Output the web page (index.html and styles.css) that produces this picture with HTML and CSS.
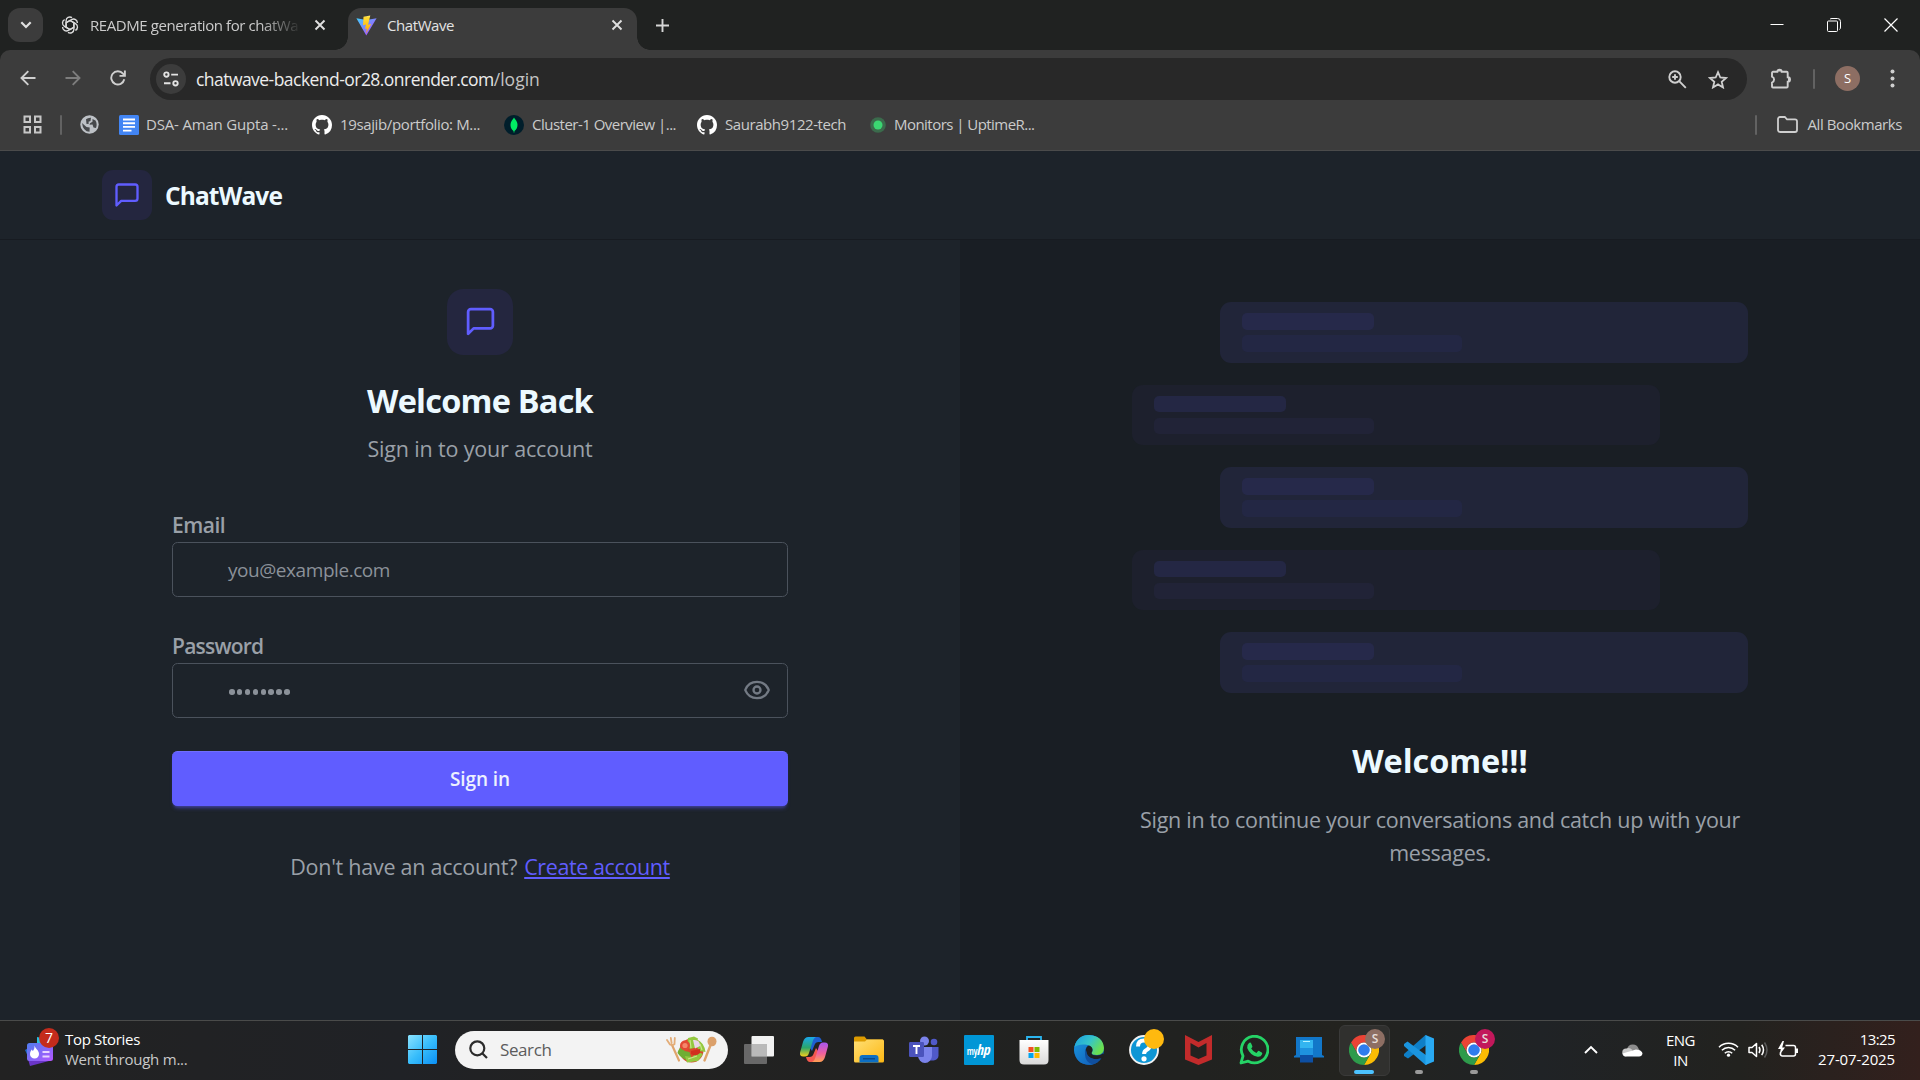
FILE: index.html
```html
<!DOCTYPE html>
<html lang="en">
<head>
<meta charset="utf-8">
<title>ChatWave</title>
<link rel="stylesheet" href="styles.css">
</head>
<body>
<svg class="defs" width="0" height="0" aria-hidden="true">
  <defs>
    <linearGradient id="gWin" x1="0" y1="0" x2="1" y2="1"><stop offset="0" stop-color="#8be3ff"/><stop offset=".5" stop-color="#38bdfb"/><stop offset="1" stop-color="#0a8ff5"/></linearGradient>
    <linearGradient id="gVite" x1="0" y1="0" x2="1" y2="1"><stop offset="0" stop-color="#41d1ff"/><stop offset="1" stop-color="#bd34fe"/></linearGradient>
    <linearGradient id="gBolt" x1="0" y1="0" x2="0" y2="1"><stop offset="0" stop-color="#ffea83"/><stop offset=".1" stop-color="#ffdd35"/><stop offset="1" stop-color="#ffa800"/></linearGradient>
    <linearGradient id="gNews" x1="0" y1="0" x2="1" y2="1"><stop offset="0" stop-color="#4f7df0"/><stop offset="1" stop-color="#b455ff"/></linearGradient>
    <linearGradient id="gFold" x1="0" y1="0" x2="1" y2="1"><stop offset="0" stop-color="#ffdf75"/><stop offset="1" stop-color="#fdb813"/></linearGradient>
    <linearGradient id="gEdge" x1="0" y1="0" x2="1" y2=".5"><stop offset="0" stop-color="#1b9de2"/><stop offset=".55" stop-color="#36c5c9"/><stop offset="1" stop-color="#6be04e"/></linearGradient>
    <linearGradient id="gEdge2" x1="0" y1="0" x2="1" y2="1"><stop offset="0" stop-color="#1a9be0"/><stop offset="1" stop-color="#1156b5"/></linearGradient>
    <linearGradient id="gCopA" x1="0" y1="0" x2="0" y2="1"><stop offset="0" stop-color="#1aa7ec"/><stop offset=".55" stop-color="#2ba66a"/><stop offset="1" stop-color="#f5cf1b"/></linearGradient>
    <linearGradient id="gCopB" x1="0" y1="1" x2="0" y2="0"><stop offset="0" stop-color="#a556f0"/><stop offset=".55" stop-color="#ee5fa0"/><stop offset="1" stop-color="#ffa052"/></linearGradient>
    <linearGradient id="gBag" x1="0" y1="0" x2="0" y2="1"><stop offset="0" stop-color="#ffffff"/><stop offset="1" stop-color="#d9d9d9"/></linearGradient>
    <symbol id="message" viewBox="0 0 24 24"><path d="M21 15a2 2 0 0 1-2 2H7l-4 4V5a2 2 0 0 1 2-2h14a2 2 0 0 1 2 2z" fill="none" stroke="currentColor" stroke-width="2" stroke-linecap="round" stroke-linejoin="round"/></symbol>
    <symbol id="cross" viewBox="0 0 12 12"><path d="M1.5 1.5l9 9M10.5 1.5l-9 9" stroke="currentColor" stroke-width="1.9" fill="none"/></symbol>
    <symbol id="github" viewBox="0 0 16 16"><path fill="#fff" d="M8 0C3.58 0 0 3.58 0 8c0 3.54 2.29 6.53 5.47 7.59.4.07.55-.17.55-.38 0-.19-.01-.82-.01-1.49-2.01.37-2.53-.49-2.69-.94-.09-.23-.48-.94-.82-1.13-.28-.15-.68-.52-.01-.53.63-.01 1.08.58 1.23.82.72 1.21 1.87.87 2.33.66.07-.52.28-.87.51-1.07-1.78-.2-3.64-.89-3.64-3.95 0-.87.31-1.59.82-2.15-.08-.2-.36-1.02.08-2.12 0 0 .67-.21 2.2.82.64-.18 1.32-.27 2-.27s1.36.09 2 .27c1.53-1.04 2.2-.82 2.2-.82.44 1.1.16 1.92.08 2.12.51.56.82 1.27.82 2.15 0 3.07-1.87 3.75-3.65 3.95.29.25.54.73.54 1.48 0 1.07-.01 1.93-.01 2.2 0 .21.15.46.55.38A8.01 8.01 0 0 0 16 8c0-4.42-3.58-8-8-8z"/></symbol>
    <symbol id="chrome" viewBox="0 0 30 30">
      <path fill="#ea4335" d="M2 7.5a15 15 0 0 1 26 0H15a7.500 7.500 0 0 0-6.500 11.250z"/>
      <path fill="#fbbc04" d="M28 7.500A15 15 0 0 1 15 30l6.500-11.250A7.500 7.500 0 0 0 15 7.500z"/>
      <path fill="#2e9b4b" d="M15 30A15 15 0 0 1 2 7.500l6.500 11.250a7.500 7.500 0 0 0 13 0z"/>
      <circle cx="15" cy="15" r="7.5" fill="#fff"/><circle cx="15" cy="15" r="5.8" fill="#2f7cee"/>
    </symbol>
  </defs>
</svg>

<header class="browser">
  <div class="tabstrip">
    <div class="tab-search"><svg width="12" height="8" viewBox="0 0 12 8"><path d="M1.300 1.300L6 6l4.700-4.700" fill="none" stroke="#e0e0e0" stroke-width="2.200"/></svg></div>
    <div class="tab">
      <svg width="18" height="18" viewBox="1.400 1.400 15.200 15.200" fill="none" stroke="#dcdcdc" stroke-width="1.150">
        <path d="M9 5.200L12.300 7.100V12.500a3.200 3.200 0 0 1-5 2.700"/><path d="M9 5.200L12.300 7.100V12.500a3.200 3.200 0 0 1-5 2.700" transform="rotate(60 9 9)"/><path d="M9 5.200L12.300 7.100V12.500a3.200 3.200 0 0 1-5 2.700" transform="rotate(120 9 9)"/><path d="M9 5.200L12.300 7.100V12.500a3.200 3.200 0 0 1-5 2.700" transform="rotate(180 9 9)"/><path d="M9 5.200L12.300 7.100V12.500a3.200 3.200 0 0 1-5 2.700" transform="rotate(240 9 9)"/><path d="M9 5.200L12.300 7.100V12.500a3.200 3.200 0 0 1-5 2.700" transform="rotate(300 9 9)"/>
      </svg>
      <span class="tab-title fading">README generation for chatWa</span>
      <svg class="tab-close" width="12" height="12"><use href="#cross"/></svg>
    </div>
    <div class="tab active">
      <svg width="21" height="21" viewBox="0 0 21 21"><path d="M.4 3.200L10.300 20.600 20.600 3.200 10.500 5z" fill="url(#gVite)"/><path d="M14.300.4L7.500 1.700 7 10.200l3-.6-.9 4.400 1.900-.5-1 4.900 5.200-9.300-3.100.6z" fill="url(#gBolt)"/></svg>
      <span class="tab-title">ChatWave</span>
      <svg class="tab-close" width="12" height="12"><use href="#cross"/></svg>
    </div>
    <svg class="new-tab" width="13" height="13" viewBox="0 0 13 13"><path d="M6.500 0v13M0 6.500h13" stroke="#d6d6d6" stroke-width="1.900"/></svg>
    <div class="window-controls">
      <svg width="14" height="14" viewBox="0 0 14 14"><path d="M.5 6.500h13" stroke="#fff" stroke-width="1"/></svg>
      <svg width="14" height="14" viewBox="0 0 14 14" fill="none" stroke="#fff"><rect x=".5" y="3" width="10" height="10.500" rx="1"/><path d="M3 1.200Q3.500.5 5 .5h5.500a3 3 0 0 1 3 3V9q0 2-1 2.500"/></svg>
      <svg width="14" height="14" viewBox="0 0 14 14"><path d="M.5.500l13 13M13.500.500l-13 13" stroke="#fff" stroke-width="1.200"/></svg>
    </div>
  </div>

  <div class="toolbar">
    <div class="nav-buttons">
      <svg width="16" height="16" viewBox="0 0 16 16" fill="none" stroke="#cfcfcf" stroke-width="1.900"><path d="M15.500 8H2M8.300 1.200L1.500 8l6.800 6.800"/></svg>
      <svg width="16" height="16" viewBox="0 0 16 16" fill="none" stroke="#7d7d7d" stroke-width="1.900"><path d="M.5 8H14M7.700 1.200L14.500 8l-6.800 6.800"/></svg>
      <svg width="16" height="16" viewBox="0 0 16 16" fill="none" stroke="#cfcfcf" stroke-width="1.900"><path d="M14.300 9.300A6.600 6.600 0 1 1 13 3.700L14.500 5.300M14.900.5v5.400H9.500"/></svg>
    </div>
    <div class="omnibox">
      <div class="site-info"><svg width="16" height="16" viewBox="0 0 16 16" fill="none" stroke="#e3e3e3" stroke-width="1.900"><circle cx="3.400" cy="3.600" r="2.200"/><path d="M8.200 3.600H15M1 12.300h6.500"/><circle cx="12.500" cy="12.300" r="2.200"/></svg></div>
      <span class="url">chatwave-backend-or28.onrender.com<span class="path">/login</span></span>
      <svg class="zoom-icon" width="19" height="19" viewBox="0 0 19 19" fill="none" stroke="#cfcfcf" stroke-width="1.900"><circle cx="7" cy="7" r="5.700"/><path d="M11.200 11.200l6.600 6.600M7 4.200v5.600M4.200 7h5.600"/></svg>
      <svg width="20" height="19" viewBox="0 0 20 19" fill="none" stroke="#cfcfcf" stroke-width="1.800"><path d="M10 2.200l2.300 5.300 5.700.5-4.300 3.800 1.300 5.600-5-3-5 3 1.300-5.600L2 8l5.700-.5z"/></svg>
    </div>
    <svg class="puzzle" width="22" height="22" viewBox="0 0 22 22"><path d="M3 3.800h4.300a2.200 2.200 0 0 1 4.400 0h5a1 1 0 0 1 1 1v4.400a2.300 2.300 0 0 1 0 4.600V18.500a1 1 0 0 1-1 1H3a1 1 0 0 1-1-1V14.600a3.200 3.200 0 0 0 0-6V4.800a1 1 0 0 1 1-1z" fill="none" stroke="#cfcfcf" stroke-width="1.900"/><path d="M7.300 3.500a2.200 2.200 0 0 1 4.400 0zM18 9.200a2.300 2.300 0 0 1 0 4.600z" fill="#cfcfcf"/></svg>
    <i class="divider"></i>
    <span class="avatar">S</span>
    <svg width="5" height="22" viewBox="0 0 5 22" fill="#cfcfcf"><circle cx="2.500" cy="3.500" r="2"/><circle cx="2.500" cy="10.500" r="2"/><circle cx="2.500" cy="17.500" r="2"/></svg>
  </div>

  <div class="bookmarks">
    <svg class="apps" width="19" height="19" viewBox="0 0 19 19" fill="none" stroke="#c7c7c7" stroke-width="2"><path d="M1.500 1.500h5.500v5.500H1.500zM12 1.500h5.500v5.500H12zM1.500 12h5.500v5.500H1.500zM12 12h5.500v5.500H12z"/></svg>
    <i class="divider"></i>
    <svg class="globe" width="19" height="19" viewBox="0 0 19 19"><circle cx="9.500" cy="9.500" r="9.200" fill="#bdc1c6"/><path d="M6 4.300q2-1.800 5-1.600L10.500 6l-2 .8.300 2L6.500 9zM2 8l4.500 4 3.200.6-.2 4.200Q3 16.500 2 8zM12.500 4l3 1.500Q17.500 9 16 13l-2.500-.6-1-2.900-3 .3.500-1.600 2.500-1.400z" fill="#46484b"/></svg>
    <div class="bookmark b-dsa"><svg width="20" height="20" viewBox="0 0 20 20"><rect width="20" height="20" rx="1.500" fill="#4285f4"/><path d="M4 4.500h12M4 8.200h12M4 11.900h12M4 15.600h8.500" stroke="#fff" stroke-width="1.900"/></svg><span>DSA- Aman Gupta -...</span></div>
    <div class="bookmark b-port"><svg width="20" height="20"><use href="#github"/></svg><span>19sajib/portfolio: M...</span></div>
    <div class="bookmark b-clus"><svg width="20" height="20" viewBox="0 0 20 20"><circle cx="10" cy="10" r="10" fill="#001e2b"/><path d="M10 2.500c1 2 3.500 3.800 3.500 7.500 0 3-1.500 4.800-3.100 6v1.500h-.8V16C8 14.800 6.500 13 6.500 10c0-3.700 2.500-5.500 3.500-7.500z" fill="#00ed64"/></svg><span>Cluster-1 Overview |...</span></div>
    <div class="bookmark b-saur"><svg width="20" height="20"><use href="#github"/></svg><span>Saurabh9122-tech</span></div>
    <div class="bookmark b-mon"><svg width="16" height="16" viewBox="0 0 16 16"><circle cx="8" cy="8" r="7.800" fill="#3b6b4c"/><circle cx="8" cy="8" r="4.500" fill="#3bd671"/></svg><span>Monitors | UptimeR...</span></div>
    <div class="all-bookmarks"><i class="divider"></i><svg width="21" height="17" viewBox="0 0 21 17"><path d="M1 3a2 2 0 0 1 2-2h4.800L10 3.300h8a2 2 0 0 1 2 2V14a2 2 0 0 1-2 2H3a2 2 0 0 1-2-2z" fill="none" stroke="#cfcfcf" stroke-width="1.800"/></svg><span>All Bookmarks</span></div>
  </div>
</header>

<div class="page">
  <nav class="navbar">
    <div class="logo"><svg width="28" height="28"><use href="#message"/></svg></div>
    <span class="brand">ChatWave</span>
  </nav>
  <main class="columns">
    <section class="login">
      <div class="logo large"><svg width="33" height="33"><use href="#message"/></svg></div>
      <h1>Welcome Back</h1>
      <p class="subtitle">Sign in to your account</p>
      <form>
        <label class="l-email">Email</label>
        <div class="field">you@example.com</div>
        <label class="l-pass">Password</label>
        <div class="field"><span class="dots"><i></i><i></i><i></i><i></i><i></i><i></i><i></i><i></i></span>
          <svg class="eye" width="28" height="28" viewBox="0 0 24 24" fill="none" stroke="#737a84" stroke-width="2" stroke-linecap="round" stroke-linejoin="round"><path d="M2.062 12.348a1 1 0 0 1 0-.696 10.750 10.750 0 0 1 19.876 0 1 1 0 0 1 0 .696 10.750 10.750 0 0 1-19.876 0"/><circle cx="12" cy="12" r="3"/></svg>
        </div>
        <div class="submit">Sign in</div>
      </form>
      <p class="signup"><span>Don't have an account?</span><a>Create account</a></p>
    </section>
    <section class="showcase">
      <div class="bubbles">
        <div class="bubble end"><i></i><b></b></div>
        <div class="bubble"><i></i><b></b></div>
        <div class="bubble end"><i></i><b></b></div>
        <div class="bubble"><i></i><b></b></div>
        <div class="bubble end"><i></i><b></b></div>
      </div>
      <h2>Welcome!!!</h2>
      <p class="blurb">Sign in to continue your conversations and catch up with your messages.</p>
    </section>
  </main>
</div>

<footer class="taskbar">
  <div class="widget">
    <div class="news">
      <svg width="30" height="32" viewBox="0 0 30 32"><path d="M12 2l14 3v12H12z" fill="#29bfe0"/><path d="M0 15l5-3v14z" fill="#2469c9"/><path d="M3 24l21 2-19 5z" fill="#6a35c8"/><rect x="2" y="8" width="26" height="18" rx="2.500" fill="url(#gNews)"/><path d="M9.500 10.500c.5 3 4.500 4.500 4.500 8.500a4.500 4.500 0 0 1-9 .2c0-2.300 1-3 1.500-4.700l1.400 1.500c1.300-1.500 1.700-3 1.600-5.500z" fill="#fff"/><path d="M17.500 17h7M17.500 21.500h7" stroke="#e8d4ff" stroke-width="1.800"/></svg>
      <span class="count">7</span>
    </div>
    <div class="headline"><span class="title">Top Stories</span><span class="text">Went through m...</span></div>
  </div>
  <svg class="start" width="29" height="29" viewBox="0 0 29 29"><path d="M1 0h13v14H0V1zM15 0h13l1 1v13H15zM0 15h14v14H1l-1-1zM15 15h14v13l-1 1H15z" fill="url(#gWin)"/></svg>
  <div class="search">
    <svg width="19" height="19" viewBox="0 0 19 19" fill="none" stroke="#2b2b2b" stroke-width="2.200"><circle cx="8.300" cy="8.300" r="7"/><path d="M13.200 13.200l4.800 4.800"/></svg>
    <span>Search</span>
    <svg width="51" height="28" viewBox="0 0 51 28">
      <path d="M6 9l7 15.500" stroke="#dfa46c" stroke-width="2.200" stroke-linecap="round"/><path d="M1 4l3 4.500q2.500 1.500 4.500-.5L8.800 2M4.800 2l.8 5" stroke="#e3ad78" stroke-width="1.800" fill="none" stroke-linecap="round"/>
      <path d="M45 8l-6.500 16.500" stroke="#dfa46c" stroke-width="2.400" stroke-linecap="round"/><ellipse cx="46" cy="5.500" rx="4.500" ry="4.800" fill="#dba06a"/>
      <circle cx="25.500" cy="14.500" r="12" fill="#d8492c"/><path d="M11.500 17q1-5 6-8l1 6 5 1 2 6-2 3q-8-2-12-8z" fill="#6fae33"/><path d="M22 2l6-1.500 4 2-2 9-6 1.500-3-4zM31 4q7 2 8.500 12l-6-1-4-6zM19 20l7 1 6-5 5 2-5 7-11 1.500z" fill="#93c83f"/><path d="M24 4l1 8M34 8l2 6M22 23l9-3" stroke="#c9e688" stroke-width="1.200"/><circle cx="19" cy="9.500" r="5" fill="#e34a33"/><circle cx="19" cy="9.500" r="2.600" fill="#f4876b"/><path d="M27 4q7-1 7 6l-5 2.500z" fill="#e9d6e8"/><path d="M25 15l9-2v4q-4 4-9 1z" fill="#d1301f"/>
    </svg>
  </div>
  <div class="apps-row">
    <div class="app"><svg width="30" height="28" viewBox="0 0 30 28"><rect x="7.500" y="0" width="22.500" height="20.500" rx="1" fill="#f1f1f1"/><rect x="0" y="8" width="23" height="20" rx="1" fill="#747474" opacity=".85"/><path d="M7.500 8H23v12.500H7.500z" fill="#b9b9b9"/></svg></div>
    <div class="app"><svg width="28" height="25" viewBox="0 0 28 25"><path d="M8 0h10q3 0 4 5h-3.500q-3 0-4 3L12 14 8 8z" fill="#1d5fd0"/><path d="M8 0h10q3 0 4 5h-3.500q-3 0-4 3L12 14 8 8z" fill="#f4584f" transform="rotate(180 14 12.500)"/><path d="M8.500 0H16q-2.500 1-3.500 5L9 16q-1 3.500-4 3.500H3Q-1 19.500.200 15L3 5Q4.500 0 8.500 0z" fill="url(#gCopA)"/><path d="M8.500 0H16q-2.500 1-3.500 5L9 16q-1 3.500-4 3.500H3Q-1 19.500.200 15L3 5Q4.500 0 8.500 0z" fill="url(#gCopB)" transform="rotate(180 14 12.500)"/></svg></div>
    <div class="app"><svg width="30" height="27" viewBox="0 0 30 27"><path d="M0 2q0-1.500 1.500-1.500h9L13 3.500H29V9H0z" fill="#dd9b00"/><path d="M0 5.500h11l2-2h15.500Q30 3.500 30 5v20q0 1.500-1.500 1.500h-27Q0 26.500 0 25z" fill="url(#gFold)"/><path d="M5.500 26.500V22q0-3 3-3h13q3 0 3 3v4.500z" fill="#0c6fc4"/><path d="M9 22.800h12" stroke="#08427f" stroke-width="1.200"/></svg></div>
    <div class="app"><svg width="30" height="28" viewBox="0 0 30 28"><circle cx="15.500" cy="5" r="4.500" fill="#7b83eb"/><circle cx="25" cy="6" r="3.300" fill="#5059c9"/><path d="M20 11h9.500v8.500a5 5 0 0 1-5 5H20z" fill="#5059c9"/><path d="M9 11h14v8.500a7 7.500 0 0 1-14 0z" fill="#7b83eb"/><rect y="6" width="15" height="15" rx="1.300" fill="#4b53bc"/><path d="M4 10h7M7.500 10v8" stroke="#fff" stroke-width="1.900"/></svg></div>
    <div class="app"><span class="myhp"><small>my</small>hp</span></div>
    <div class="app"><svg width="30" height="30" viewBox="0 0 30 30"><path d="M8 6V2h14v4" fill="none" stroke="#2bb5ef" stroke-width="1.800"/><path d="M.5 5h29v20q0 4.500-4.500 4.500H5Q.5 29.500.5 25z" fill="url(#gBag)"/><path d="M9.500 12h5v5h-5z" fill="#f25022"/><path d="M15.500 12h5v5h-5z" fill="#7fba00"/><path d="M9.500 18h5v5h-5z" fill="#00a4ef"/><path d="M15.500 18h5v5h-5z" fill="#ffb900"/></svg></div>
    <div class="app"><svg width="30" height="30" viewBox="0 0 30 30"><circle cx="15" cy="15" r="15" fill="#0c59a4"/><path d="M0 15A15 15 0 0 1 15 0q9 0 13 7-14-2-17 8-1 9 8 14.500Q2 31.500 0 15z" fill="url(#gEdge2)"/><path d="M.5 12Q3 0 15 0q14 1 15 13 0 7-7 7-6 0-5.500-2.500Q19 16 18.500 14 17 10 11 9.500 4 9 .5 12z" fill="url(#gEdge)"/><path d="M12 16q-.5-4 3-5.500 3.500 1 3.500 4.500 0 1.500-1 3 0 2.500 5.500 2.500 3.500 0 6-2l1.500 1.500-2 3.500Q22 25 18 23.500 13 22 12 16z" fill="#1f2021"/><path d="M12 15q1 8 8 9 4 .5 7-1-3 5-8 6.500-8-2-8-11z" fill="#104f9e"/></svg></div>
    <div class="app badged"><svg width="30" height="30" viewBox="0 0 30 30"><circle cx="15" cy="15" r="14" fill="#0e96d5" stroke="#f2f2f2" stroke-width="1.900"/><path d="M9 11.500q0-6 6-6 5.800 0 5.800 4.700 0 3-3.300 4.800-2.400 1.300-2.400 4" fill="none" stroke="#fff" stroke-width="4"/><circle cx="15" cy="23.800" r="2.600" fill="#fff"/></svg><i class="dot"></i></div>
    <div class="app"><svg width="27" height="30" viewBox="0 0 27 30"><path fill-rule="evenodd" d="M0 0l13.500 7L27 0v24.500L13.500 30 0 24.500zM5.500 8v12.500l8 3.500 8-3.500V8l-8 4.500z" fill="#c22b2b"/></svg></div>
    <div class="app"><svg width="30" height="30" viewBox="0 0 30 30"><path d="M2 28l2-7A13.300 13.300 0 1 1 9.200 26.200z" fill="none" stroke="#25d366" stroke-width="2.800" stroke-linejoin="round"/><path d="M10 8q1.500-1 2.200.4l1.200 2.800q.2.800-1.200 2.200 2 3.400 5.200 4.600l1.700-2q.5-.3 1 0l2.700 1.400q.8.400.3 1.900-1.300 3-4.600 2.500Q11 20.300 8.200 13 7.600 10 10 8z" fill="#25d366"/></svg></div>
    <div class="app"><svg width="30" height="27" viewBox="0 0 30 27"><path d="M2 1h26v18l2 1v1.500H0V20l2-1z" fill="#1277c9"/><path d="M6 4h13v8H6z" fill="#33b5f0"/><path d="M6 12h13v7H6z" fill="#1e93df"/><path d="M6 19h13v7.500H6z" fill="#0d4fa3"/><path d="M9 5.500h7" stroke="#b3f1ff"/></svg></div>
    <div class="app current badged"><svg width="30" height="30"><use href="#chrome"/></svg><span class="profile tan">S</span><i class="running wide"></i></div>
    <div class="app badged"><svg width="30" height="30" viewBox="0 0 30 30"><path d="M21.500 0L23 1v8.500L4 23.500 0 21v-2z" fill="#0f7fc7"/><path d="M0 9l3.500-2.500L22.500 20.500V30h-1L0 11z" fill="#1a94de"/><path d="M21.500 0L30 3.500v23L21.500 30z" fill="#29a9f2"/></svg><i class="running"></i></div>
    <div class="app badged"><svg width="30" height="30"><use href="#chrome"/></svg><span class="profile pink">S</span><i class="running"></i></div>
  </div>
  <div class="tray">
    <svg width="14" height="9" viewBox="0 0 14 9"><path d="M1 8l6-6 6 6" fill="none" stroke="#fff" stroke-width="1.900"/></svg>
    <svg class="cloud" width="21" height="14" viewBox="0 0 21 14"><path d="M5 6a6 6 0 0 1 11.500-.5L19 9H3z" fill="#8d8d8d"/><path d="M4 13.500A4 4 0 0 1 4.500 5.500Q7.500 4 10.500 7z" fill="#c9c9c9"/><path d="M4 13.500Q1 13 .6 10.500L14 6.500q6 .5 6.500 4-.5 3-3.500 3z" fill="#fff"/></svg>
    <div class="lang"><span>ENG</span><span>IN</span></div>
    <svg class="wifi" width="21" height="17" viewBox="0 0 21 17" fill="none" stroke="#fff" stroke-width="1.500"><path d="M1 6.300a13.400 13.400 0 0 1 19 0M3.900 9.300a9.300 9.300 0 0 1 13.200 0M6.800 12.200a5.200 5.200 0 0 1 7.400 0"/><circle cx="10.500" cy="14.200" r="1.600" fill="#fff" stroke="none"/></svg>
    <svg class="volume" width="21" height="18" viewBox="0 0 21 18" fill="none" stroke="#fff" stroke-width="1.500"><path d="M1 6.500h3L8.500 2.500v13L4 11.500H1z" stroke-linejoin="round"/><path d="M11 6q2 3 0 6M13.700 3.800q3.500 5 0 10.400"/><path d="M16.500 1.500q5 7.500 0 15" stroke="#5c5c5c"/></svg>
    <svg class="battery" width="21" height="18" viewBox="0 0 21 18" fill="none" stroke="#fff" stroke-width="1.500"><path d="M7.500 4.500h8a2 2 0 0 1 2 2V13a2 2 0 0 1-2 2h-11a2 2 0 0 1-2-2v-2"/><path d="M19 7.500v4.500" stroke-width="2"/><path d="M4.500 0L0 8h2.800L1.500 14 7 6.500H4.200L6 0z" fill="#fff" stroke="none"/></svg>
    <div class="clock"><span class="time">13:25</span><span>27-07-2025</span></div>
  </div>
</footer>
</body>
</html>
```
FILE: styles.css
```css
* { box-sizing: border-box; }
body {
  margin: 0; width: 1920px; height: 1080px; overflow: hidden;
  display: flex; flex-direction: column;
  background: #1d232a; font-family: "Open Sans", "Noto Sans", sans-serif; white-space: nowrap;
}
svg { display: block; flex: none; }
.defs { position: absolute; }
h1, h2, p { margin: 0; }

/* browser chrome */
.browser { background: #202221; height: 151px; flex: none; }
.tabstrip { display: flex; align-items: center; height: 50px; padding-left: 8px; font-size: 15px; color: #cbcbcb; }
.tab-search { width: 35px; height: 34px; border-radius: 12px; background: #3c3c3c; display: flex; align-items: center; justify-content: center; }
.tab { display: flex; align-items: center; width: 287px; margin-left: 18px; }
.tab-title { margin-left: 11px; letter-spacing: -.42px; }
.tab-title.fading { width: 210px; overflow: hidden; -webkit-mask-image: linear-gradient(90deg, #000 170px, transparent 212px); mask-image: linear-gradient(90deg, #000 170px, transparent 212px); }
.tab-close { color: #e0e0e0; margin-left: 14px; }
.tab.active {
  position: relative; width: 289px; height: 42px; align-self: flex-end; margin-left: 0; padding: 0 14px 8px 8px;
  background: #3c3c3c; border-radius: 13px 13px 0 0; color: #e3e3e3;
}
.tab.active .tab-title { margin-left: 10px; }
.tab.active .tab-close { margin-left: auto; }
.tab.active::before, .tab.active::after { content: ""; position: absolute; bottom: 0; width: 13px; height: 13px; }
.tab.active::before { left: -13px; background: radial-gradient(circle at 0 0, transparent 12.5px, #3c3c3c 13px); }
.tab.active::after { right: -13px; background: radial-gradient(circle at 100% 0, transparent 12.5px, #3c3c3c 13px); }
.new-tab { margin-left: 19px; }
.window-controls { display: flex; gap: 43px; margin: 0 22px 1px auto; }

.toolbar { display: flex; align-items: center; height: 51px; padding: 7px 25px 0 20px; background: #3c3c3c; border-radius: 10px 10px 0 0; }
.nav-buttons { display: flex; gap: 29px; width: 130px; padding-bottom: 2px; }
.omnibox { display: flex; align-items: center; width: 1597px; height: 42px; border-radius: 21px; background: #282828; padding: 0 19px 0 6px; }
.site-info { width: 30px; height: 30px; border-radius: 50%; background: #3c3c3c; display: flex; align-items: center; justify-content: center; }
.url { margin-left: 10px; font-size: 17.500px; letter-spacing: -.54px; color: #ececec; }
.path { color: #c4c4c4; letter-spacing: 0; }
.zoom-icon { margin: 0 21px 0 auto; }
.puzzle { margin-left: 23px; }
.divider { width: 2px; height: 20px; background: #626262; border-radius: 1px; flex: none; }
.toolbar .divider { margin-left: 21px; margin-right: 20px; }
.avatar { width: 25px; height: 25px; margin: 0 30px 1px 0; border-radius: 50%; background: #8d6e63; color: #fff; font-size: 13px; line-height: 25px; text-align: center; }

.bookmarks { display: flex; align-items: center; height: 50px; padding: 0 18px 2px 23px; background: #3c3c3c; border-bottom: 1px solid #4b4b4b; font-size: 15px; color: #cbcbcb; }
.bookmarks span { margin-bottom: 1px; }
.bookmarks .apps { margin-right: 18px; }
.globe { margin: 0 20px 0 18px; }
.bookmark { display: flex; align-items: center; gap: 8px; }
.b-dsa { width: 193px; letter-spacing: -.18px; gap: 7px; }
.b-port { width: 192px; letter-spacing: -.36px; }
.b-clus { width: 193px; letter-spacing: -.51px; }
.b-saur { width: 173px; letter-spacing: -.43px; }
.b-mon { letter-spacing: -.54px; }
.all-bookmarks { display: flex; align-items: center; margin-left: auto; letter-spacing: -.42px; }
.all-bookmarks svg { margin: 0 10px 0 20px; }

/* page */
.page { flex: none; height: 869px; display: flex; flex-direction: column; }
.navbar { display: flex; align-items: center; height: 89px; padding-left: 102px; border-bottom: 1px solid #171b21; background: #1d232a; }
.logo { width: 50px; height: 50px; border-radius: 11px; background: #24263f; color: #605dff; display: flex; align-items: center; justify-content: center; }
.navbar .logo svg { margin-bottom: 1px; }
.brand { margin-left: 13px; font-size: 24.500px; font-weight: 700; letter-spacing: -.88px; color: #ecf9ff; }
.columns { flex: 1; display: grid; grid-template-columns: 960px 960px; color: #9aa0a8; font-size: 21.500px; }
.login { display: flex; flex-direction: column; align-items: center; padding-top: 49px; }
.logo.large { width: 66px; height: 66px; border-radius: 16.500px; }
.logo.large svg { margin-bottom: 1px; }
h1 { margin-top: 22px; font-size: 32.500px; line-height: 48px; letter-spacing: -.77px; color: #ecf9ff; }
.subtitle { margin-top: 7px; line-height: 33px; letter-spacing: -.16px; }
form { width: 616px; margin-top: 44px; }
label { display: block; line-height: 33px; font-weight: 600; font-size: 21px; }
.l-email { letter-spacing: -.5px; }
.l-pass { letter-spacing: -.78px; margin-top: 33px; }
.field { display: flex; align-items: center; height: 55px; border: 1px solid #4b525c; border-radius: 5.500px; padding: 0 16px 0 55px; font-size: 19px; letter-spacing: -.44px; color: #8b9199; }
.dots { display: flex; gap: 2.300px; padding: 3px 0 0 1px; }
.dots i { width: 5.600px; height: 5.600px; border-radius: 50%; background: #8b9199; }
.eye { margin: 0 0 2px auto; }
.submit { height: 55px; margin-top: 33px; border-radius: 5.500px; background: #605dff; color: #edf1fe; font-size: 19px; font-weight: 600; letter-spacing: -.1px; line-height: 54px; text-align: center; border-top: 1px solid #716efe; box-shadow: 0 4px 4px -2px rgba(96, 93, 255, .4), 0 3px 3px -2px rgba(96, 93, 255, .3); }
.signup { display: flex; gap: 7px; margin-top: 44px; line-height: 33px; letter-spacing: -.26px; }
.signup a { color: #605dff; letter-spacing: -.4px; text-decoration: underline; text-decoration-thickness: 2px; text-underline-offset: 2px; }
.showcase { display: flex; flex-direction: column; align-items: center; padding-top: 62px; background: #191e24; }
.bubbles { width: 616px; display: flex; flex-direction: column; gap: 22px; }
.bubble { width: 528px; height: 60.500px; border-radius: 11px; background: #1d202d; padding: 11px 22px; display: flex; flex-direction: column; gap: 5.500px; }
.bubble i, .bubble b { width: 132px; height: 16.500px; border-radius: 5px; background: #242744; }
.bubble b { width: 220px; background: #212337; }
.bubble.end { align-self: flex-end; background: #212539; }
.bubble.end i { background: #26294a; }
.bubble.end b { background: #232744; }
h2 { margin-top: 44px; font-size: 32.500px; line-height: 48px; letter-spacing: -.1px; color: #ecf9ff; }
.blurb { width: 616px; margin-top: 18px; line-height: 33px; letter-spacing: -.28px; text-align: center; white-space: normal; }

/* taskbar */
.taskbar { flex: none; height: 60px; display: flex; align-items: center; padding-bottom: 2px; border-top: 1px solid #4a4b4a; color: #fff; font-size: 15px; background: linear-gradient(90deg, #222222 0, #202226 400px, #222222 560px, #212220 1200px, #23231f 1340px, #202326 1540px, #22221f 1740px, #33201d 1920px); }
.widget { display: flex; align-items: center; width: 408px; padding-left: 25px; gap: 10px; }
.news { position: relative; padding-top: 2px; }
.count { position: absolute; left: 14px; top: -5px; width: 20px; height: 20px; border-radius: 50%; background: #c42b1c; font-size: 14px; line-height: 20px; text-align: center; }
.headline { display: flex; flex-direction: column; line-height: 20px; padding-bottom: 2px; }
.headline .title { letter-spacing: -.31px; }
.headline .text { letter-spacing: -.24px; color: #c8c8c8; }
.search { display: flex; align-items: center; width: 273px; height: 38px; margin: 0 3px 0 18px; padding: 0 11px 0 14px; border-radius: 19px; background: #f3f3f3; color: #5c5c5c; font-size: 17px; }
.search span { margin: 0 auto 0 12px; letter-spacing: -.4px; }
.apps-row { display: flex; }
.app { width: 55px; height: 57px; display: flex; align-items: center; justify-content: center; }
.badged { position: relative; }
.current::before { content: ""; position: absolute; left: 3px; top: 4px; width: 49px; height: 49px; border-radius: 6px; border: 1px solid #3a3a39; background: #30302e; z-index: 0; }
.current svg { position: relative; }
.dot { position: absolute; left: 28px; top: 8px; width: 20px; height: 20px; border-radius: 50%; background: #ffb90f; }
.profile { position: absolute; left: 29px; top: 8px; width: 20px; height: 20px; border-radius: 50%; font-size: 12px; font-weight: 600; line-height: 20px; text-align: center; color: #e5dcd8; }
.tan { background: #8d6e63; }
.pink { background: #c2185b; }
.running { position: absolute; bottom: 4px; left: 23.500px; width: 8px; height: 4px; border-radius: 2px; background: #9a9a9a; }
.running.wide { left: 17.500px; width: 20px; background: #4cc2ff; }
.myhp { width: 30px; height: 30px; border-radius: 1px; background: #0096d6; color: #fff; font: italic 700 15px/29px "Open Sans", sans-serif; font-stretch: 75%; text-align: center; letter-spacing: -.3px; }
.myhp small { font-size: 10px; font-style: normal; font-weight: 600; }
.tray { display: flex; align-items: center; margin-left: auto; padding-right: 25px; }
.cloud { margin-left: 24px; }
.lang { display: flex; flex-direction: column; align-items: center; margin-left: 23px; line-height: 20px; letter-spacing: -.5px; }
.wifi { margin-left: 23px; }
.volume { margin-left: 9px; }
.battery { margin-left: 9px; }
.clock { display: flex; flex-direction: column; align-items: flex-end; width: 96px; line-height: 20px; padding-bottom: 2px; letter-spacing: -.13px; }
.time { letter-spacing: -.6px; }
```
